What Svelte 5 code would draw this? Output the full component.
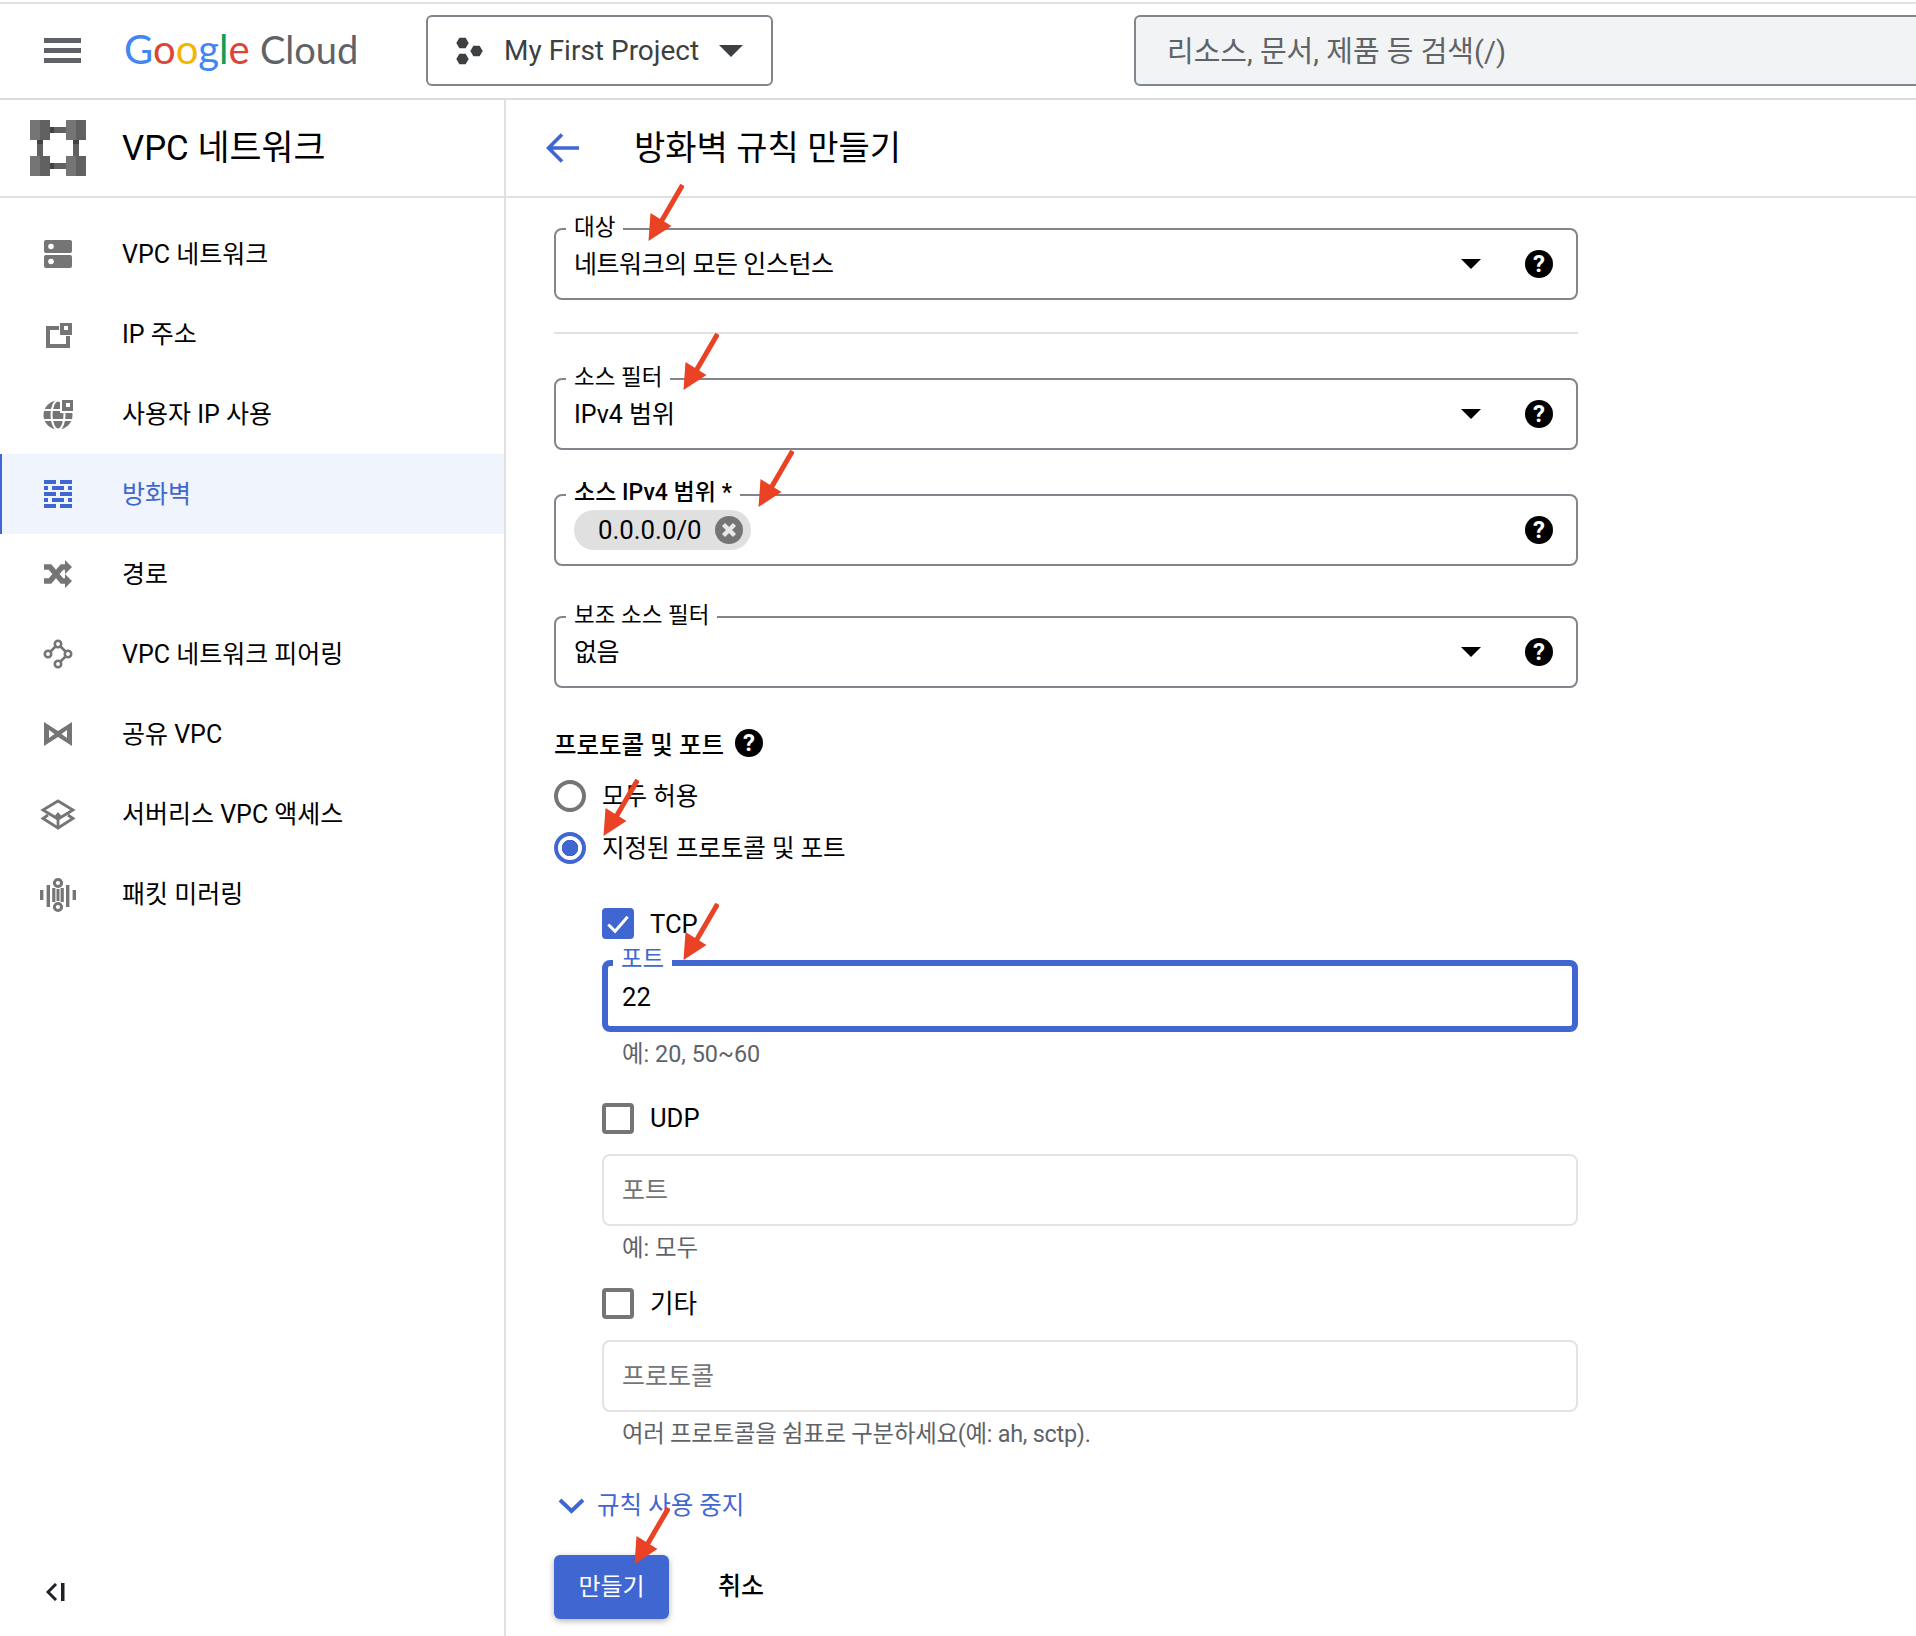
<script lang="ts">
  const navItems = [
    { key: 'vpc', label: 'VPC 네트워크' },
    { key: 'ip', label: 'IP 주소' },
    { key: 'globe', label: '사용자 IP 사용' },
    { key: 'firewall', label: '방화벽', active: true },
    { key: 'route', label: '경로' },
    { key: 'peering', label: 'VPC 네트워크 피어링' },
    { key: 'shared', label: '공유 VPC' },
    { key: 'service', label: '서버리스 VPC 액세스' },
    { key: 'mirror', label: '패킷 미러링' }
  ];

  // annotation arrows drawn over the screenshot, tip-box corner in page px
  const arrows = [
    { x: 648, y: 184 },
    { x: 683, y: 333 },
    { x: 758, y: 450 },
    { x: 603, y: 779 },
    { x: 683, y: 903 },
    { x: 634, y: 1507 }
  ];

  function hex(cx: number, cy: number, r: number) {
    const h = r * 0.866;
    return `${cx - r},${cy} ${cx - r / 2},${cy - h} ${cx + r / 2},${cy - h} ${cx + r},${cy} ${cx + r / 2},${cy + h} ${cx - r / 2},${cy + h}`;
  }
</script>

{#snippet navIcon(key)}
  <svg class="nav-icon" viewBox="0 0 28 28" aria-hidden="true">
    {#if key === 'vpc'}
      <rect width="28" height="13" rx="2" />
      <rect y="15" width="28" height="13" rx="2" />
      <circle cx="7" cy="6.5" r="2.8" fill="#fff" />
      <circle cx="7" cy="21.5" r="2.8" fill="#fff" />
    {:else if key === 'ip'}
      <path d="M2 6H15V10H6V24H22V16H26V28H2Z" />
      <rect x="16" y="3" width="12" height="12" />
      <rect x="20" y="6" width="4" height="4" fill="#fff" />
    {:else if key === 'globe'}
      <circle cx="14" cy="15" r="14.5" />
      <g fill="none" stroke="#fff" stroke-width="2">
        <ellipse cx="14" cy="15" rx="6.5" ry="14.5" />
        <path d="M0 10H28M0 20H28" />
      </g>
      <rect x="16" y="-2" width="16" height="15" fill="#fff" />
      <rect x="18" y="0" width="11" height="11" />
      <rect x="22" y="3" width="4" height="4" fill="#fff" />
    {:else if key === 'firewall'}
      <path d="M0 0H12V4H0ZM16 0H28V4H16ZM0 6H4V10H0ZM8 6H20V10H8ZM24 6H28V10H24ZM0 12H12V16H0ZM16 12H28V16H16ZM0 18H4V22H0ZM8 18H20V22H8ZM24 18H28V22H24ZM0 24H12V28H0ZM16 24H28V28H16Z" />
    {:else if key === 'route'}
      <path d="M0 7H6L18 21H23M0 21H6L18 7H23" fill="none" stroke="#757575" stroke-width="5.5" />
      <path d="M21 0L28 7L21 14ZM21 14L28 21L21 28Z" />
    {:else if key === 'peering'}
      <g fill="none" stroke="#757575" stroke-width="2.6">
        <circle cx="14" cy="4" r="3.2" />
        <circle cx="4" cy="14" r="3.2" />
        <circle cx="24" cy="14" r="3.2" />
        <circle cx="14" cy="24" r="3.2" />
        <path d="M11.5 6.5L6.5 11.5M16.5 6.5L21.5 11.5M21.5 16.5L16.5 21.5" />
      </g>
    {:else if key === 'shared'}
      <path fill-rule="evenodd" d="M0 2L14 11L28 2V26L14 17L0 26ZM5 10V18L10.5 14ZM23 10L17.5 14L23 18Z" />
    {:else if key === 'service'}
      <g fill="none" stroke="#757575" stroke-width="2.8">
        <path d="M14 1L29 10L14 19L-1 10Z" />
        <path d="M4 15L-1 18.5L14 28L29 18.5L24 15" />
      </g>
      <path d="M12.6 27V18H9L14 12L19 18H15.4V27Z" />
    {:else if key === 'mirror'}
      <rect x="-4" y="10" width="3.4" height="10" />
      <rect x="2.6" y="5" width="3.4" height="22" />
      <rect x="8.2" y="8" width="3.2" height="14" />
      <rect x="12.5" y="9" width="3" height="12" />
      <rect x="16.6" y="8" width="3.2" height="14" />
      <rect x="22" y="5" width="3.4" height="22" />
      <rect x="28.6" y="10" width="3.4" height="10" />
      <g fill="none" stroke="#757575" stroke-width="3">
        <circle cx="14" cy="3" r="3.6" />
        <circle cx="14" cy="27" r="3.6" />
      </g>
    {/if}
  </svg>
{/snippet}

{#snippet helpIcon()}
  <span class="help" aria-hidden="true">?</span>
{/snippet}

{#snippet selectField(label, value, tight = true)}
  <div class="field">
    <span class="field-label">{label}</span>
    <span class="field-value" class:tight>{value}</span>
    <span class="caret"></span>
    {@render helpIcon()}
  </div>
{/snippet}

<div class="page">
  <div class="top-line"></div>
  <header class="topbar">
    <div class="menu" aria-label="메뉴"><i></i><i></i><i></i></div>
    <div class="logo">
      <span class="g-blue">G</span><span class="g-red">o</span><span class="g-yellow">o</span><span class="g-blue">g</span><span class="g-green">l</span><span class="g-red">e</span>
      <span class="cloud">Cloud</span>
    </div>
    <button class="project">
      <svg class="hexes" viewBox="0 0 27 28" aria-hidden="true">
        <polygon points={hex(6.5, 6, 6.2)} />
        <polygon points={hex(20.5, 14, 6.2)} />
        <polygon points={hex(6.5, 22, 6.2)} />
      </svg>
      <span>My First Project</span>
      <span class="project-caret"></span>
    </button>
    <div class="search">리소스, 문서, 제품 등 검색(/)</div>
  </header>

  <div class="body">
    <aside class="sidebar">
      <div class="side-head">
        <svg class="side-logo" viewBox="0 0 56 56" aria-hidden="true">
          <path fill="#616161" d="M20 7H36V13H20ZM20 43H36V49H20ZM7 20H13V36H7ZM43 20H49V36H43Z" />
          <path fill="#424242" d="M20 7H24V13H20ZM20 43H24V49H20ZM7 20H13V24H7ZM43 20H49V24H43Z" />
          {#each [[0, 0], [36, 0], [0, 36], [36, 36]] as [x, y]}
            <rect {x} {y} width="10" height="20" fill="#757575" />
            <rect x={x + 10} {y} width="10" height="20" fill="#616161" />
          {/each}
        </svg>
        <h2>VPC 네트워크</h2>
      </div>
      <nav>
        {#each navItems as item}
          <div class="nav-item" class:active={item.active}>
            {@render navIcon(item.key)}
            <span class="nav-label">{item.label}</span>
          </div>
        {/each}
      </nav>
      <div class="collapse" aria-label="접기">
        <svg viewBox="0 0 20 18" aria-hidden="true">
          <path d="M10 1L2 9L10 17" fill="none" stroke="#202124" stroke-width="3" />
          <rect x="15" width="3.5" height="18" fill="#202124" />
        </svg>
      </div>
    </aside>

    <main class="content">
      <div class="content-head">
        <svg class="back" viewBox="0 0 33 30" aria-hidden="true">
          <path d="M16 1.5L2.5 15L16 28.5M2.5 15H33" fill="none" stroke="#4067d1" stroke-width="3.6" />
        </svg>
        <h1>방화벽 규칙 만들기</h1>
      </div>

      <form class="form">
        {@render selectField('대상', '네트워크의 모든 인스턴스')}
        <div class="divider"></div>
        <div class="gap-44">{@render selectField('소스 필터', 'IPv4 범위', false)}</div>
        <div class="field gap-44">
          <span class="field-label medium">소스 IPv4 범위 *</span>
          <span class="chip">
            0.0.0.0/0
            <svg viewBox="0 0 28 28" aria-hidden="true">
              <circle cx="14" cy="14" r="14" fill="#757575" />
              <path d="M8.5 8.5L19.5 19.5M19.5 8.5L8.5 19.5" stroke="#e8e8e8" stroke-width="4.4" />
            </svg>
          </span>
          <span class="spacer"></span>
          {@render helpIcon()}
        </div>
        <div class="gap-50">{@render selectField('보조 소스 필터', '없음')}</div>

        <div class="section-title">프로토콜 및 포트 {@render helpIcon()}</div>

        <label class="radio-row first">
          <span class="radio"></span><span class="lift">모두 허용</span>
        </label>
        <label class="radio-row second">
          <span class="radio on"></span><span class="lift">지정된 프로토콜 및 포트</span>
        </label>

        <div class="protocols">
          <label class="check-row tcp">
            <span class="check on">
              <svg viewBox="0 0 32 32" aria-hidden="true">
                <path d="M6 17L13 24L26 9" fill="none" stroke="#fff" stroke-width="3" />
              </svg>
            </span><span class="lift">TCP</span>
          </label>
          <div class="input focused">
            <span class="field-label focused-label">포트</span>
            <span class="input-value">22</span>
          </div>
          <p class="hint">예: 20, 50~60</p>

          <label class="check-row udp"><span class="check"></span>UDP</label>
          <div class="input idle first-idle"><span class="placeholder">포트</span></div>
          <p class="hint">예: 모두</p>

          <label class="check-row other"><span class="check"></span><span class="lift">기타</span></label>
          <div class="input idle"><span class="placeholder">프로토콜</span></div>
          <p class="hint long">여러 프로토콜을 쉼표로 구분하세요(예: ah, sctp).</p>
        </div>

        <div class="disable-link">
          <svg viewBox="0 0 27 16" aria-hidden="true">
            <path d="M2 2L13.5 13L25 2" fill="none" stroke="#4067d1" stroke-width="4" />
          </svg>
          <span class="link-text">규칙 사용 중지</span>
        </div>

        <div class="actions">
          <button type="button" class="primary">만들기</button>
          <button type="button" class="ghost">취소</button>
        </div>
      </form>
    </main>
  </div>

  {#each arrows as a}
    <svg class="arrow" style:left="{a.x}px" style:top="{a.y}px" viewBox="0 0 36 58" aria-hidden="true">
      <path d="M34.5 1L13 38" stroke="#e94225" stroke-width="5" fill="none" />
      <path d="M0.5 57L2.5 29L23.5 42Z" fill="#e94225" />
    </svg>
  {/each}
</div>

<style>
  :global(body) {
    margin: 0;
    background: #fff;
  }

  .page {
    position: relative;
    width: 1916px;
    height: 1636px;
    overflow: hidden;
    background: #fff;
    color: #000;
    font-family: Roboto, 'Noto Sans CJK KR', sans-serif;
    font-size: 25.6px;
  }

  .top-line {
    height: 2px;
    margin-top: 2px;
    background: #e2e2e4;
  }

  .topbar {
    display: flex;
    align-items: center;
    height: 93px;
    padding-bottom: 1px;
    border-bottom: 2px solid #dcdce0;
  }

  .menu {
    display: flex;
    flex: 0 0 auto;
    flex-direction: column;
    gap: 5px;
    width: 37px;
    margin-left: 44px;
  }

  .menu i {
    display: block;
    height: 5px;
    background: #5f6368;
  }

  .logo {
    flex: 0 0 auto;
    width: 302px;
    margin-left: 43px;
    padding-bottom: 3px;
    font-family: Lato, sans-serif;
    font-size: 40px;
    line-height: 50px;
    white-space: nowrap;
  }

  .g-blue { color: #4285f4; }
  .g-red { color: #db4437; }
  .g-yellow { color: #f4b400; }
  .g-green { color: #0f9d58; }

  .cloud {
    color: #5f6368;
    font-size: 38px;
  }

  .project {
    display: flex;
    flex: 0 0 auto;
    align-items: center;
    width: 347px;
    height: 71px;
    padding: 0 0 0 28px;
    border: 2px solid #80868b;
    border-radius: 6px;
    background: #fff;
    color: #3c4043;
    font: inherit;
    font-size: 28px;
    white-space: nowrap;
    box-sizing: border-box;
  }

  .hexes {
    width: 27px;
    height: 28px;
    margin-right: 21px;
    fill: #3c4043;
  }

  .project-caret {
    width: 0;
    height: 0;
    margin-left: 20px;
    border-left: 12px solid transparent;
    border-right: 12px solid transparent;
    border-top: 12px solid #3c4043;
  }

  .search {
    flex: 0 0 auto;
    width: 900px;
    height: 71px;
    margin-left: 361px;
    padding-left: 31px;
    border: 2px solid #80868b;
    border-radius: 6px;
    background: #f1f3f4;
    color: #5f6368;
    font-size: 29px;
    line-height: 71px;
    box-sizing: border-box;
  }

  .body {
    display: flex;
    height: 1536px;
  }

  .sidebar {
    display: flex;
    flex-direction: column;
    flex: 0 0 auto;
    width: 506px;
    border-right: 2px solid #e0e0e0;
    box-sizing: border-box;
  }

  .side-head {
    display: flex;
    align-items: center;
    flex: 0 0 auto;
    height: 96px;
    padding-left: 30px;
    border-bottom: 2px solid #e0e0e0;
  }

  .side-logo {
    width: 56px;
    height: 56px;
    margin-right: 36px;
  }

  h2,
  h1 {
    margin: 0;
    font-weight: 400;
    line-height: 48px;
  }

  h2 {
    font-size: 34.8px;
  }

  h1 {
    font-size: 34px;
  }

  nav {
    padding-top: 16px;
  }

  .nav-item {
    display: flex;
    align-items: center;
    height: 80px;
    padding-left: 44px;
    color: #000;
    box-sizing: border-box;
  }

  .nav-label {
    padding-bottom: 5px;
    font-size: 25px;
  }

  .nav-item.active {
    padding-left: 42px;
    border-left: 2px solid #4067d1;
    background: #f0f4fd;
    color: #4067d1;
  }

  .nav-icon {
    width: 28px;
    height: 28px;
    margin-right: 50px;
    overflow: visible;
    fill: #757575;
  }

  .active .nav-icon {
    fill: #4067d1;
  }

  .collapse {
    margin-top: auto;
    margin-bottom: 35px;
    padding-left: 46px;
    line-height: 0;
  }

  .collapse svg {
    width: 20px;
    height: 18px;
  }

  .content {
    flex: 1;
    min-width: 0;
  }

  .content-head {
    display: flex;
    align-items: center;
    height: 96px;
    padding-left: 40px;
    border-bottom: 2px solid #e0e0e0;
  }

  .back {
    width: 33px;
    height: 30px;
    margin-right: 55px;
  }

  .form {
    width: 1024px;
    margin-left: 48px;
    padding-top: 30px;
  }

  .field {
    position: relative;
    display: flex;
    align-items: center;
    height: 72px;
    padding: 0 23px 0 18px;
    border: 2px solid #80868b;
    border-radius: 8px;
    box-sizing: border-box;
  }

  .field-label {
    position: absolute;
    top: -18px;
    left: 10px;
    padding: 0 8px;
    background: #fff;
    font-size: 22.5px;
    line-height: 30px;
    white-space: nowrap;
  }

  .field-label.medium {
    font-size: 23px;
    font-weight: 500;
  }

  .field-value {
    flex: 1;
    padding-bottom: 5px;
    font-size: 25px;
  }

  .field-value.tight {
    letter-spacing: -0.45px;
  }

  .spacer {
    flex: 1;
  }

  .caret {
    width: 0;
    height: 0;
    margin-right: 44px;
    border-left: 10px solid transparent;
    border-right: 10px solid transparent;
    border-top: 10px solid #000;
  }

  .help {
    display: inline-flex;
    align-items: center;
    justify-content: center;
    flex: 0 0 auto;
    width: 28px;
    height: 28px;
    border-radius: 50%;
    background: #000;
    color: #fff;
    font-size: 24px;
    font-weight: 700;
    line-height: 28px;
  }

  .divider {
    height: 2px;
    margin-top: 32px;
    background: #e0e0e0;
  }

  .gap-44 {
    margin-top: 44px;
  }

  .gap-50 {
    margin-top: 50px;
  }

  .chip {
    display: inline-flex;
    align-items: center;
    height: 40px;
    padding: 0 8px 0 24px;
    border-radius: 20px;
    background: #e0e0e0;
    font-size: 25.8px;
    line-height: 40px;
    white-space: nowrap;
  }

  .chip svg {
    width: 28px;
    height: 28px;
    margin-left: 13px;
  }

  .section-title {
    display: flex;
    align-items: center;
    gap: 11px;
    height: 28px;
    margin-top: 41px;
    font-size: 24.5px;
    font-weight: 500;
  }

  .radio-row {
    display: flex;
    align-items: center;
    height: 32px;
    font-size: 24.5px;
    line-height: 32px;
  }

  .radio-row.first {
    margin-top: 23px;
  }

  .radio-row.second {
    margin-top: 20px;
  }

  .lift {
    padding-top: 2px;
  }

  .radio {
    width: 32px;
    height: 32px;
    margin-right: 16px;
    border: 4px solid #757575;
    border-radius: 50%;
    box-sizing: border-box;
  }

  .radio.on {
    border-color: #4067d1;
    background: radial-gradient(circle, #4067d1 0 8px, #fff 8.5px);
  }

  .protocols {
    padding-left: 48px;
  }

  .check-row {
    display: flex;
    align-items: center;
    height: 31px;
    line-height: 31px;
  }

  .check-row.tcp {
    margin-top: 44px;
  }

  .check-row.udp {
    margin-top: 34px;
  }

  .check-row.other {
    margin-top: 25px;
  }

  .check {
    display: block;
    width: 32px;
    height: 31px;
    margin-right: 16px;
    border: 4px solid #757575;
    border-radius: 4px;
    box-sizing: border-box;
  }

  .check.on {
    border: 0;
    background: #4067d1;
  }

  .check svg {
    display: block;
    width: 32px;
    height: 31px;
  }

  .input {
    display: flex;
    align-items: center;
    position: relative;
    height: 72px;
    margin-top: 21px;
    padding-left: 18px;
    border-radius: 8px;
    box-sizing: border-box;
  }

  .input.first-idle {
    margin-top: 20px;
  }

  .input.focused {
    padding-left: 14px;
    border: 6px solid #4067d1;
  }

  .focused-label {
    top: -22px;
    left: 5px;
    color: #4067d1;
    font-size: 23.4px;
  }

  .input-value {
    padding-top: 2px;
  }

  .input.idle {
    border: 2px solid #e3e3e3;
    color: #757575;
  }

  .placeholder {
    padding-bottom: 4px;
    font-size: 25px;
  }

  .hint {
    margin: 7px 0 0 20px;
    color: #5f6368;
    font-size: 23.4px;
    line-height: 30px;
  }

  .hint.long {
    letter-spacing: -0.25px;
  }

  .disable-link {
    display: flex;
    align-items: center;
    height: 30px;
    margin-top: 42px;
    padding-left: 4px;
    color: #4067d1;
  }

  .disable-link svg {
    width: 27px;
    height: 16px;
    margin-right: 12px;
  }

  .link-text {
    padding-bottom: 6px;
    font-size: 24.5px;
  }

  .actions {
    display: flex;
    align-items: center;
    margin-top: 34px;
  }

  button {
    font-family: inherit;
  }

  .primary {
    width: 115px;
    height: 64px;
    padding: 0 0 6px;
    border: 0;
    border-radius: 6px;
    background: #4067d1;
    box-shadow: 0 2px 6px rgba(60, 64, 67, 0.4);
    color: #fff;
    font-size: 24px;
    font-weight: 400;
  }

  .ghost {
    margin-left: 49px;
    padding: 0 0 6px;
    border: 0;
    background: none;
    color: #000;
    font-size: 25px;
    font-weight: 500;
  }

  .arrow {
    position: absolute;
    width: 36px;
    height: 58px;
    pointer-events: none;
  }
</style>
